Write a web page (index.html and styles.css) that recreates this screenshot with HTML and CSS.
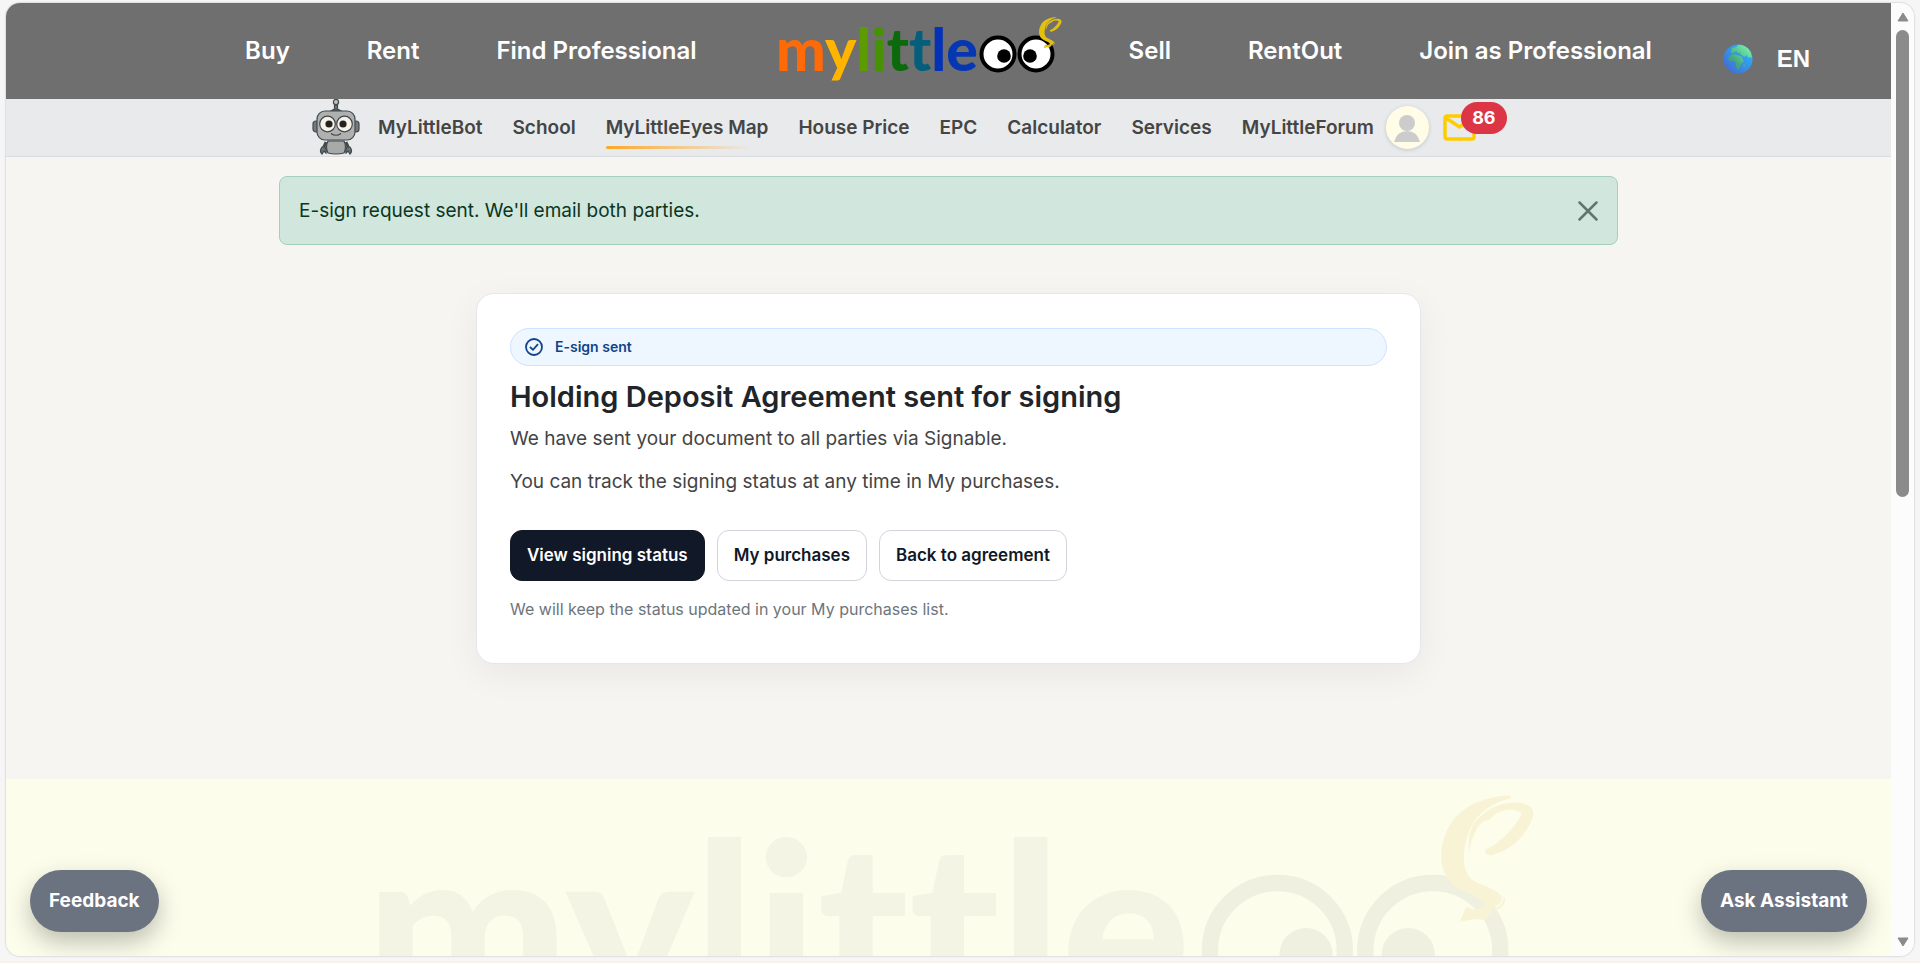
FILE: index.html
```html
<!DOCTYPE html>
<html lang="en">
<head>
    <meta charset="UTF-8">
    <meta name="viewport" content="width=device-width, initial-scale=1.0">
    <title>Holding Deposit Agreement | MyLittleEyes</title>
    <link rel="stylesheet" href="styles.css">
</head>
<body>
    <svg width="0" height="0" class="sprite" aria-hidden="true">
        <defs>
            <!-- the squiggle above the second eye -->
            <g id="squiggle" transform="translate(254.800 -2.900) scale(0.0815)">
                <path d="M275 50 C200 48 130 80 95 130 C60 185 55 250 82 295 C105 330 145 340 180 358 C200 370 190 380 205 392 C230 385 250 370 246 352 C225 325 180 320 155 300 C120 265 132 200 150 150 C170 105 215 70 272 58 Z"/>
                <path d="M160 135 C190 95 240 68 290 70 C325 72 345 85 341 110 C325 160 280 215 215 228 C198 228 190 217 200 210 C240 195 290 140 306 104 C295 90 262 88 235 100 C220 105 215 125 195 125 C175 135 160 165 148 215 C145 180 150 160 160 135 Z"/>
                <path d="M120 428 L140 384 L165 392 L218 376 C216 390 225 398 208 404 C206 418 190 426 165 420 Z"/>
                <path d="M252 352 C268 370 240 395 215 396 C235 385 254 372 252 352 Z"/>
            </g>
        </defs>
    </svg>

    <div class="window">
        <div class="page">
            <header class="topbar">
                <nav class="topnav" aria-label="Main">
                    <a href="#">Buy</a>
                    <a href="#">Rent</a>
                    <a href="#">Find Professional</a>
                    <a href="#" class="logo" aria-label="mylittleeyes">
                        <svg viewBox="-5 0 278 70" width="278" height="70">
                            <text class="logo-text" x="-3" y="55"><tspan fill="#ff6a08">m</tspan><tspan fill="#ffb400">y</tspan><tspan fill="#5d9c00">l</tspan><tspan fill="#479107">i</tspan><tspan fill="#0d6a0c">t</tspan><tspan fill="#045f7c">t</tspan><tspan fill="#0432b4">l</tspan><tspan fill="#0637b3">e</tspan></text>
                            <g fill="#fff" stroke="#000" stroke-width="4">
                                <circle cx="219" cy="38" r="16.500"/>
                                <circle cx="257" cy="38" r="16.500"/>
                            </g>
                            <circle cx="225" cy="40" r="6.800"/>
                            <circle cx="251" cy="40" r="6.800"/>
                            <use href="#squiggle" fill="#e3bf10"/>
                        </svg>
                    </a>
                    <a href="#">Sell</a>
                    <a href="#">RentOut</a>
                    <a href="#">Join as Professional</a>
                </nav>
                <button type="button" class="lang">
                    <svg viewBox="0 0 30 30" width="30" height="30" aria-hidden="true">
                        <defs>
                            <linearGradient id="sea" x1="0" y1="1" x2="1" y2="0">
                                <stop offset="0" stop-color="#4663d0"/>
                                <stop offset="1" stop-color="#27bdff"/>
                            </linearGradient>
                            <linearGradient id="land" x1="0" y1="1" x2="1" y2="0">
                                <stop offset="0.300" stop-color="#45a37d"/>
                                <stop offset="1" stop-color="#7dffb8"/>
                            </linearGradient>
                        </defs>
                        <circle cx="15" cy="15" r="14.500" fill="url(#sea)"/>
                        <path fill="url(#land)" d="M8 7 L9 4 L13 3 L15 1 C20 0 26 4 28 9 L29 14 L27 13 L25 14 L24 11 L21 13 L19 11 L17 11 L18 9 L15 9 L13 7 L11 9 L8 9 Z M7 12 L10 10 L14 11 L17 12 L19 13 L20 16 L21 17 L18 20 L17 24 L15 26 L13 23 L13 19 L11 17 L7 17 L5 15 Z M21 20 L22 21 L21 23 L20 22 Z"/>
                    </svg>
                    EN
                </button>
            </header>

            <nav class="subnav" aria-label="Tools">
                <div class="subnav-inner">
                    <svg class="robot" viewBox="0 0 48 57" width="48" height="57" aria-hidden="true">
                        <g stroke="#43484b" stroke-width="1.200">
                            <path d="M22.500 6 h3 v5 h-3 z" fill="#6d7376"/>
                            <path d="M19 12 q5 -4 10 0 z" fill="#6d7376"/>
                            <circle cx="24" cy="3" r="2.600" fill="#b9c2c5"/>
                            <rect x="1" y="22" width="6" height="11" rx="3" fill="#727b7f"/>
                            <rect x="41" y="22" width="6" height="11" rx="3" fill="#727b7f"/>
                            <path d="M14 43 L11 50 M34 43 L37 50" fill="none" stroke-width="3"/>
                            <path d="M10 48 q-3 4 0 7 l2 -3 l2 2 q1 -4 -1 -6 z" fill="#687175"/>
                            <path d="M38 48 q3 4 0 7 l-2 -3 l-2 2 q-1 -4 1 -6 z" fill="#687175"/>
                            <path d="M16 42 h16 q3 6 0 12 q-8 2 -16 0 q-3 -6 0 -12 z" fill="#a7aaa8"/>
                            <rect x="5" y="12" width="38" height="29" rx="8" fill="#aeb1af"/>
                            <circle cx="15.500" cy="25" r="7.800" fill="#f6f2ea"/>
                            <circle cx="32.500" cy="25" r="7.800" fill="#f6f2ea"/>
                            <path d="M19 34.500 Q24 38 29 34.500" fill="none"/>
                        </g>
                        <circle cx="17" cy="25" r="3.600" fill="#24211f"/>
                        <circle cx="31" cy="25" r="3.600" fill="#24211f"/>
                    </svg>
                    <a href="#">MyLittleBot</a>
                    <a href="#">School</a>
                    <a href="#" class="active">MyLittleEyes Map</a>
                    <a href="#">House Price</a>
                    <a href="#">EPC</a>
                    <a href="#">Calculator</a>
                    <a href="#">Services</a>
                    <a href="#">MyLittleForum</a>
                    <div class="account">
                        <a href="#" class="avatar" aria-label="Profile">
                            <svg viewBox="0 0 43 43" width="43" height="43">
                                <circle cx="21" cy="17" r="8" fill="#ccc"/>
                                <path d="M8 36 Q11 25 21 25 Q31 25 34 36 Z" fill="#ccc"/>
                            </svg>
                        </a>
                        <a href="#" class="mail" aria-label="Messages">
                            <svg viewBox="0 0 33 27" width="33" height="27" fill="none" stroke="#fc0" stroke-width="3.500">
                                <rect x="2" y="2" width="29" height="23" rx="2"/>
                                <path d="M3 4 L16.500 13 L30 4"/>
                            </svg>
                            <span class="count">86</span>
                        </a>
                    </div>
                </div>
            </nav>

            <main class="content">
                <div class="alert" role="alert">
                    <span>E-sign request sent. We'll email both parties.</span>
                    <button type="button" class="close" aria-label="Close">
                        <svg viewBox="0 0 20 20" width="20" height="20" fill="none" stroke="currentColor" stroke-width="2.500" stroke-linecap="round">
                            <path d="M1.500 1.500 L18.500 18.500 M18.500 1.500 L1.500 18.500"/>
                        </svg>
                    </button>
                </div>

                <section class="card">
                    <div class="status">
                        <svg viewBox="0 0 18 18" width="18" height="18" fill="none" stroke="currentColor" stroke-width="1.800" aria-hidden="true">
                            <circle cx="9" cy="9" r="8"/>
                            <path d="M5 9 L8 11.800 L13 6.200"/>
                        </svg>
                        E-sign sent
                    </div>
                    <h1>Holding Deposit Agreement sent for signing</h1>
                    <p>We have sent your document to all parties via Signable.</p>
                    <p>You can track the signing status at any time in My purchases.</p>
                    <div class="actions">
                        <button type="button" class="btn btn-dark">View signing status</button>
                        <button type="button" class="btn">My purchases</button>
                        <button type="button" class="btn">Back to agreement</button>
                    </div>
                    <p class="note">We will keep the status updated in your My purchases list.</p>
                </section>
            </main>

            <footer class="footer">
                <svg class="watermark" viewBox="-8 0 295 70" aria-hidden="true">
                    <text class="logo-text" x="-3" y="55" fill="#f3f4e4">mylittle</text>
                    <g fill="none" stroke="#eff0e0" stroke-width="4">
                        <circle cx="220" cy="39" r="16.500"/>
                        <circle cx="258" cy="39" r="16.500"/>
                    </g>
                    <g fill="#eff0e0">
                        <circle cx="227" cy="40" r="6.500"/>
                        <circle cx="252" cy="40" r="6.500"/>
                    </g>
                    <use href="#squiggle" fill="#f9f3d6"/>
                </svg>
            </footer>
        </div>

        <div class="scrollbar" aria-hidden="true">
            <svg viewBox="0 0 12 10" width="12" height="10"><path d="M6 1 L11 9 H1 Z" stroke="#8b8b8b" stroke-linejoin="round"/></svg>
            <div class="track"><div class="thumb"></div></div>
            <svg viewBox="0 0 12 10" width="12" height="10"><path d="M6 9 L11 1 H1 Z" stroke="#8b8b8b" stroke-linejoin="round"/></svg>
        </div>

        <button type="button" class="fab fab-left">Feedback</button>
        <button type="button" class="fab fab-right">Ask Assistant</button>
    </div>
</body>
</html>
```
FILE: styles.css
```css
* {
    box-sizing: border-box;
}
body {
    margin: 0;
    height: 100vh;
    padding: 3px 6px 5px;
    overflow: hidden;
    background-color: #f6f6f7;
    border-bottom: 2px solid #fbf0e8;
    font-family: Inter, "Liberation Sans", sans-serif;
    font-size: 19px;
    line-height: 28px;
    color: #212529;
}
a {
    color: inherit;
    text-decoration: none;
}
button {
    font-family: inherit;
    cursor: pointer;
}
svg {
    display: block;
}
.sprite {
    position: absolute;
}

/* Window frame */
.window {
    position: relative;
    display: flex;
    height: calc(100vh - 10px);
    overflow: hidden;
    border-radius: 14px;
    background-color: #f6f5f1;
    box-shadow: 0 0 2px rgba(0, 0, 0, 0.3);
}
.page {
    flex: 1;
    display: flex;
    flex-direction: column;
    overflow: hidden;
}

/* Top bar */
.topbar {
    display: grid;
    grid-template-columns: 1fr auto 1fr;
    align-items: center;
    flex: none;
    height: 96px;
    background-color: #6f6f6f;
    color: #fff;
}
.topnav {
    grid-column: 2;
    display: flex;
    align-items: center;
    gap: 77px;
    font-size: 24px;
    font-weight: 600;
    white-space: nowrap;
}
.logo svg {
    overflow: visible;
}
.logo-text {
    font-family: Lato, "Open Sans", sans-serif;
    font-size: 59px;
    font-weight: 900;
    font-variant-ligatures: none;
}
.lang {
    justify-self: end;
    display: flex;
    align-items: center;
    gap: 24px;
    margin-right: 81px;
    padding: 15px 0 0;
    border: none;
    background: none;
    color: #fff;
    font-family: "Liberation Sans", Arial, sans-serif;
    font-size: 24px;
    font-weight: 700;
}

/* Second bar */
.subnav {
    flex: none;
    height: 58px;
    background-color: #e8eaec;
    border-bottom: 1px solid #d9dcdf;
}
.subnav-inner {
    display: flex;
    align-items: center;
    gap: 30px;
    max-width: 1339px;
    height: 57px;
    margin: 0 auto;
    padding-left: 33px;
    font-size: 19px;
    font-weight: 600;
    color: #454545;
    white-space: nowrap;
}
.robot {
    margin-right: -12px;
}
.active {
    position: relative;
}
.active::after {
    content: "";
    position: absolute;
    left: 0;
    right: 0;
    bottom: -7px;
    height: 3px;
    border-radius: 2px;
    background: linear-gradient(to right, #ffa726, rgba(255, 167, 38, 0) 90%);
}
.account {
    display: flex;
    align-items: center;
    gap: 14px;
    margin-left: -18px;
}
.avatar {
    border-radius: 50%;
    background-color: #fffde7;
    box-shadow: 0 1px 4px rgba(0, 0, 0, 0.15);
}
.mail {
    position: relative;
}
.count {
    position: absolute;
    left: 18px;
    top: -12px;
    width: 46px;
    height: 32px;
    border-radius: 16px;
    background-color: #dc3545;
    color: #fff;
    font-size: 18px;
    font-weight: 700;
    line-height: 32px;
    text-align: center;
}

/* Content */
.content {
    flex: none;
    padding: 19px 24px 115px;
}
.alert {
    display: flex;
    align-items: center;
    justify-content: space-between;
    max-width: 1339px;
    margin: 0 auto 48px;
    padding: 20px 19px 19px;
    border: 1px solid #a3cfbb;
    border-radius: 8px;
    background-color: #d1e7dd;
    color: #0a3622;
}
.close {
    padding: 0;
    border: none;
    background: none;
    color: #64756c;
}
.card {
    max-width: 945px;
    margin: 0 auto;
    padding: 34px 33px 40px;
    border: 1px solid #e5e7eb;
    border-radius: 18px;
    background-color: #fff;
    box-shadow: 0 10px 36px rgba(0, 0, 0, 0.06);
}
.status {
    display: flex;
    align-items: center;
    gap: 12px;
    padding: 4px 14px;
    border: 1px solid #cfe2ff;
    border-radius: 19px;
    background-color: #eef6ff;
    color: #0f4587;
    font-size: 14px;
    font-weight: 600;
}
.card h1 {
    margin: 13px 0 10px;
    font-size: 29px;
    font-weight: 600;
    line-height: 36px;
}
.card p {
    margin: 0 0 15px;
    color: #444;
}
.actions {
    display: flex;
    flex-wrap: wrap;
    gap: 12px;
    margin-top: 34px;
}
.btn {
    padding: 11px 16px;
    border: 1px solid #d1d5db;
    border-radius: 12px;
    background-color: #fff;
    color: #111827;
    font-size: 17px;
    font-weight: 600;
    line-height: 27px;
}
.btn-dark {
    border-color: #111827;
    background-color: #111827;
    color: #fff;
}
.card .note {
    margin: 14px 0 0;
    color: #6c757d;
    font-size: 16px;
}

/* Footer */
.footer {
    flex: 1;
    min-height: 0;
    padding-top: 12px;
    overflow: hidden;
    background-color: #fcfdeb;
}
.watermark {
    width: 64%;
    margin: 0 auto;
}

/* Scrollbar */
.scrollbar {
    display: flex;
    flex-direction: column;
    align-items: center;
    gap: 8px;
    width: 23px;
    padding: 9px 0;
    background-color: #fcfcfc;
    fill: #8b8b8b;
}
.track {
    flex: 1;
    width: 13px;
}
.thumb {
    height: 52%;
    border-radius: 7px;
    background-color: #8b8b8b;
}

/* Floating buttons */
.fab {
    position: absolute;
    bottom: 24px;
    padding: 17px 19px;
    border: none;
    border-radius: 31px;
    background-color: #6b7280;
    box-shadow: 0 10px 24px rgba(0, 0, 0, 0.25);
    color: #fff;
    font-size: 19px;
    font-weight: 700;
    line-height: 28px;
}
.fab-left {
    left: 24px;
}
.fab-right {
    right: 47px;
}
```
